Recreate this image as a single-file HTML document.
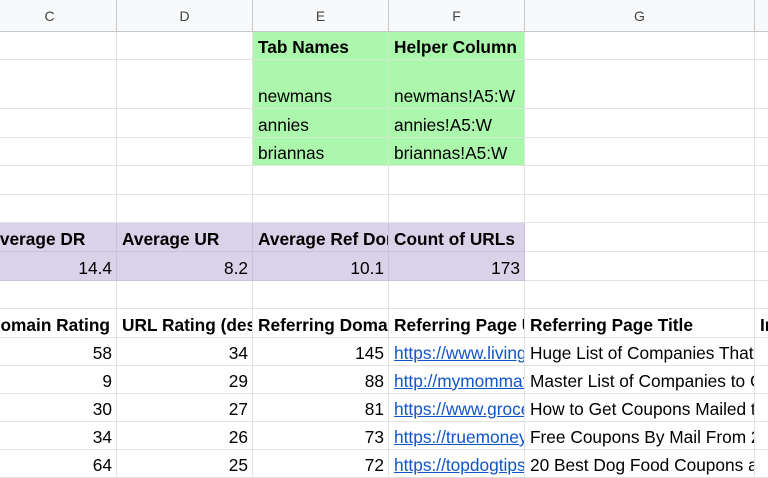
<!DOCTYPE html><html><head><style>
body{margin:0;width:768px;height:470px;overflow:hidden;background:#fff;font-family:"Liberation Sans",Arial,sans-serif;position:relative}
.c{position:absolute;box-sizing:border-box;border-right:1px solid #e2e2e2;border-bottom:1px solid #e2e2e2;overflow:hidden;white-space:nowrap;font-size:17.3px;color:#000;display:flex;align-items:flex-end;padding:0 4px 1px 5px}
.h{background:#f8f9fa;border-color:#c8c8c8;color:#444;font-size:14px;justify-content:center;align-items:center;padding:0}
.g{background:#abf7ab;border-color:#d4e8d4}
.p{background:#d9d2e9;border-color:#c9c2d9}
.b{font-weight:bold}
.r{justify-content:flex-end}
.l{color:#1155cc;text-decoration:underline}
</style></head><body>
<div id="root"></div>
<script>
var X=[-17,117,253,389,525,755,900];
var Y=[0,32,60,109,138,166,195,223,252,281,309,338,366,394,422,450,478];
var data={
0:["C","D","E","F","G",""],
1:["","","Tab Names","Helper Column","",""],
2:["","","newmans","newmans!A5:W","",""],
3:["","","annies","annies!A5:W","",""],
4:["","","briannas","briannas!A5:W","",""],
5:["","","","","",""],6:["","","","","",""],
7:["Average DR","Average UR","Average Ref Domains","Count of URLs","",""],
8:["14.4","8.2","10.1","173","",""],
9:["","","","","",""],
10:["Domain Rating","URL Rating (desc)","Referring Domains","Referring Page URL","Referring Page Title","In"],
11:["58","34","145","https://www.livingonthecheap.com","Huge List of Companies That Send Free Stuff",""],
12:["9","29","88","http://mymommaforlife.com","Master List of Companies to Get Coupons",""],
13:["30","27","81","https://www.grocerycouponguide.com","How to Get Coupons Mailed to You",""],
14:["34","26","73","https://truemoneysaver.com","Free Coupons By Mail From 2021",""],
15:["64","25","72","https://topdogtips.com","20 Best Dog Food Coupons and Deals",""]};
var h="";
for(var r=0;r<16;r++)for(var c=0;c<6;c++){
 var cls="c",t=data[r][c];
 if(r==0)cls+=" h";
 if(r>=1&&r<=4&&(c==2||c==3))cls+=" g";
 if((r==7||r==8)&&c<=3)cls+=" p";
 if(r==1||r==7||r==10)cls+=" b";
 if((r==8||r>=11)&&c<=2)cls+=" r";
 if(r==8&&c==3)cls+=" r";
 if(r>=11&&c==3)t='<span class="l">'+t+'</span>';
 h+='<div class="'+cls+'" style="left:'+X[c]+'px;top:'+Y[r]+'px;width:'+(X[c+1]-X[c])+'px;height:'+(Y[r+1]-Y[r])+'px">'+t+'</div>';
}
document.getElementById("root").innerHTML=h;
</script>
</body></html>
